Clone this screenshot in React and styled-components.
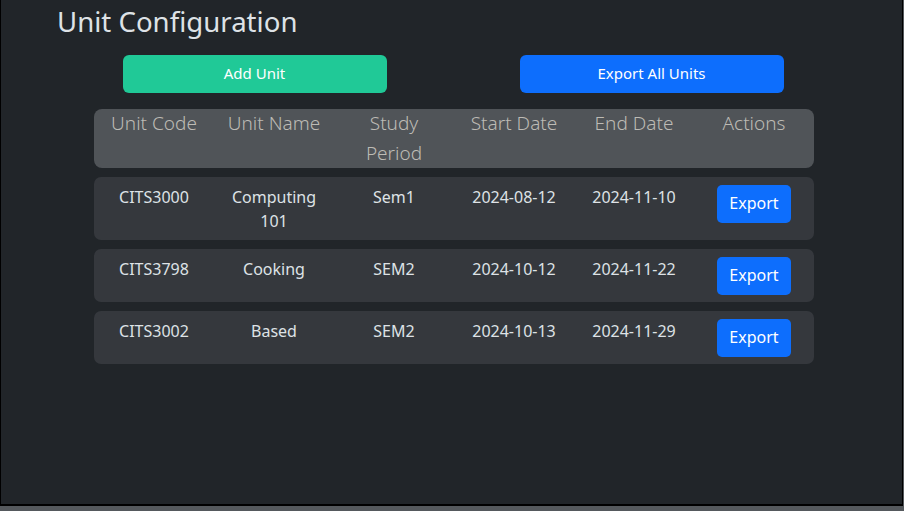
import React from "react";
import styled, { createGlobalStyle } from "styled-components";

const units = [
  { code: "CITS3000", name: "Computing 101", period: "Sem1", start: "2024-08-12", end: "2024-11-10" },
  { code: "CITS3798", name: "Cooking", period: "SEM2", start: "2024-10-12", end: "2024-11-22" },
  { code: "CITS3002", name: "Based", period: "SEM2", start: "2024-10-13", end: "2024-11-29" },
];

const columns = ["Unit Code", "Unit Name", "Study Period", "Start Date", "End Date", "Actions"];

const App = () => {
  return (
    <>
      <GlobalStyle />
      <Frame>
        <Content>
          <Title>Unit Configuration</Title>

          <ButtonBar>
            <BarCell>
              <WideButton $tone="teal">Add Unit</WideButton>
            </BarCell>
            <BarCell>
              <WideButton $tone="blue">Export All Units</WideButton>
            </BarCell>
          </ButtonBar>

          <Table>
            <HeaderRow>
              {columns.map((c) => (
                <HeaderCell key={c}>{c}</HeaderCell>
              ))}
            </HeaderRow>

            {units.map((u) => (
              <Row key={u.code}>
                <Cell>{u.code}</Cell>
                <Cell>{u.name}</Cell>
                <Cell>{u.period}</Cell>
                <Cell>{u.start}</Cell>
                <Cell>{u.end}</Cell>
                <Cell>
                  <SmallButton>Export</SmallButton>
                </Cell>
              </Row>
            ))}
          </Table>
        </Content>
      </Frame>
    </>
  );
};

const GlobalStyle = createGlobalStyle`
  body {
    margin: 0;
    background: #55595d;
    font-family: "Noto Sans", "Open Sans", sans-serif;
    color: #dee2e6;
  }
`;

const Frame = styled.div`
  box-sizing: border-box;
  width: 903px;
  height: 506px;
  background: #212529;
  border-left: 1px solid #000;
  border-right: 1px solid #000;
  border-bottom: 2px solid #000;
`;

const Content = styled.div`
  width: 794px;
  margin-left: 55px;
`;

const Title = styled.h2`
  margin: 0 0 0 1px;
  padding-top: 3px;
  font-size: 27.6px;
  font-weight: 400;
  line-height: 36px;
  color: #dee2e6;
`;

const ButtonBar = styled.div`
  display: grid;
  grid-template-columns: 1fr 1fr;
  margin-top: 16px;
`;

const BarCell = styled.div`
  display: flex;
  justify-content: center;
`;

const WideButton = styled.button`
  width: 264px;
  height: 38px;
  padding: 0 0 2px;
  border: none;
  border-radius: 6px;
  background: ${(p) => (p.$tone === "teal" ? "#20c997" : "#0d6efd")};
  color: #fff;
  font-family: inherit;
  font-size: 15px;
  cursor: pointer;
`;

const Table = styled.div`
  width: 720px;
  margin: 16px 0 0 38px;
  display: flex;
  flex-direction: column;
  gap: 9px;
`;

const HeaderRow = styled.div`
  display: grid;
  grid-template-columns: repeat(6, 1fr);
  background: #505458;
  border-radius: 8px;
`;

const HeaderCell = styled.div`
  padding: 0 9px;
  text-align: center;
  font-size: 19px;
  font-weight: 300;
  line-height: 29.5px;
  color: #bdbbb5;
`;

const Row = styled.div`
  display: grid;
  grid-template-columns: repeat(6, 1fr);
  background: #35383d;
  border-radius: 7px;
  padding: 8px 0 7px;
`;

const Cell = styled.div`
  padding: 0 8px;
  text-align: center;
  font-size: 16px;
  line-height: 24px;
  color: #dee2e6;
`;

const SmallButton = styled.button`
  height: 38px;
  padding: 0 12px 2px;
  border: none;
  border-radius: 5px;
  background: #0d6efd;
  color: #fff;
  font-family: inherit;
  font-size: 16px;
  cursor: pointer;
`;

export default App;
